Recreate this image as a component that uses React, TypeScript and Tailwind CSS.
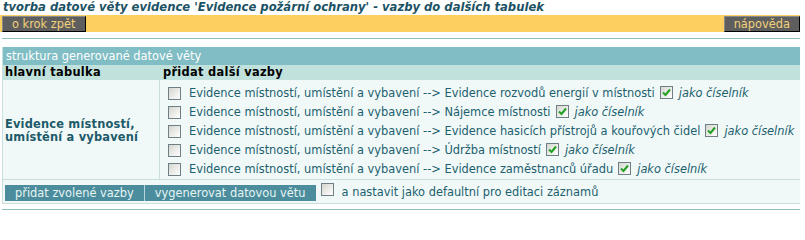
const links = [
  'Evidence rozvodů energií v místnosti',
  'Nájemce místnosti',
  'Evidence hasicích přístrojů a kouřových čidel',
  'Údržba místností',
  'Evidence zaměstnanců úřadu',
];

function CheckBox({ checked = false }: { checked?: boolean }) {
  return (
    <span className="inline-flex h-[13px] w-[13px] shrink-0 items-center justify-center border border-[#6f7f86] bg-gradient-to-br from-[#d6d6d0] to-white">
      {checked && (
        <svg width="9" height="9" viewBox="0 0 9 9">
          <path d="M1 4.5 L3.5 7 L8 1.5" fill="none" stroke="#21a121" strokeWidth="2" />
        </svg>
      )}
    </span>
  );
}

export default function App() {
  return (
    <div className="h-[212px] w-[805px] overflow-hidden bg-white font-['DejaVu_Sans',Verdana,sans-serif] text-[11.4px] text-[#215f6f]">
      {/* page title */}
      <h1 className="h-[15px] pl-[3px] text-[11.6px] font-bold italic leading-[15px] text-[#1b5264]">
        tvorba datové věty evidence 'Evidence požární ochrany' - vazby do dalších tabulek
      </h1>

      {/* top toolbar */}
      <div className="flex h-[17px] w-[800px] items-center justify-between bg-[#fcd060]">
        <button className="ml-[2px] h-[16px] border border-b-black border-r-black border-t-[#8a8a8a] border-l-[#8a8a8a] bg-[#5e5e5e] px-[9px] text-[11.4px] leading-[14px] text-[#f2d07a]">
          o krok zpět
        </button>
        <button className="h-[16px] border border-b-black border-r-black border-t-[#8a8a8a] border-l-[#8a8a8a] bg-[#5e5e5e] px-[9px] text-[11.4px] leading-[14px] text-[#f2d07a]">
          nápověda
        </button>
      </div>

      <div className="ml-[2px] mt-[6px] h-px w-[798px] bg-[#8fbdc4]" />

      {/* structure table */}
      <div className="ml-[2px] mt-[8px] w-[798px] border-b border-l border-[#c9dfde]">
        <div className="h-[18px] bg-[#80bdc4] pl-[3px] leading-[18px] text-white">
          struktura generované datové věty
        </div>
        <div className="grid h-[15px] grid-cols-[156px_1fr] bg-[#c1e2dc] font-bold leading-[15px] tracking-[0.3px] text-black">
          <div className="pl-[2px]">hlavní tabulka</div>
          <div className="pl-[4px]">přidat další vazby</div>
        </div>
        <div className="grid grid-cols-[156px_1fr] border-b border-[#c9dfde] bg-[#f1f9f8]">
          <div className="flex items-center pl-[2px] pt-[2px] font-bold leading-[13px] tracking-[0.2px] text-[#1d5a6a]">
            Evidence místností,
            <br />
            umístění a vybavení
          </div>
          <div className="flex flex-col border-l border-[#c9dfde] pt-[4px] pl-[8px]">
            {links.map((name) => (
              <div key={name} className="flex h-[19px] items-center">
                <CheckBox />
                <span className="ml-[8px] whitespace-nowrap">
                  Evidence místností, umístění a vybavení --&gt; {name}
                </span>
                <span className="ml-[5px]">
                  <CheckBox checked />
                </span>
                <span className="ml-[6px] italic">jako číselník</span>
              </div>
            ))}
          </div>
        </div>
        <div className="flex h-[23px] items-center bg-[#f1f9f8] pl-[2px] pt-[2px]">
          <button className="h-[16px] border-r border-[#b5d6da] bg-[#4b8d9c] px-[10px] text-[11.4px] leading-[16px] text-[#e6f4f4]">
            přidat zvolené vazby
          </button>
          <button className="h-[16px] bg-[#4b8d9c] px-[10px] text-[11.4px] leading-[16px] text-[#e6f4f4]">
            vygenerovat datovou větu
          </button>
          <span className="ml-[5px]">
            <CheckBox />
          </span>
          <span className="ml-[8px]">a nastavit jako defaultní pro editaci záznamů</span>
        </div>
      </div>

      <div className="ml-[2px] mt-[5px] h-px w-[798px] bg-[#8fbdc4]" />
    </div>
  );
}
